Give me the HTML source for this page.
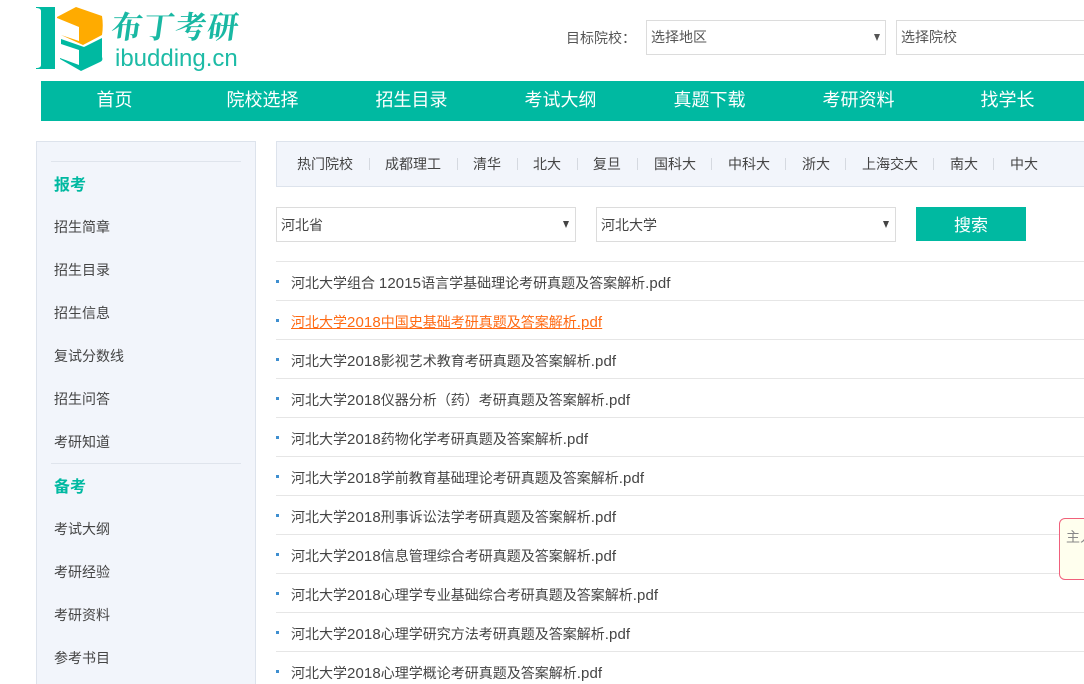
<!DOCTYPE html>
<html lang="zh"><head><meta charset="utf-8"><title>布丁考研</title>
<style>
html,body{margin:0;padding:0;background:#fff;width:1084px;height:684px;overflow:hidden}
#w{width:1084px;height:684px;overflow:hidden;position:relative;font:14px/20px "Liberation Sans","Noto Sans CJK SC",sans-serif;color:#444}
.a{position:absolute;white-space:nowrap}
.nav{position:absolute;left:41px;top:81px;width:1043px;height:40px;background:#00b9a1}
.nav span{position:absolute;top:0;width:149px;text-align:center;color:#fff;font-size:18px;line-height:38px}
.sel{position:absolute;box-sizing:border-box;background:#fff;border:1px solid #dcdcdc;color:#555;padding-left:4px}
.tri{position:absolute;width:0;height:0;border-left:3.5px solid transparent;border-right:3.5px solid transparent;border-top:7px solid #444}
.side{position:absolute;left:36px;top:141px;width:220px;height:560px;box-sizing:border-box;background:#f2f5fb;border:1px solid #dde3ec}
.hr{position:absolute;left:51px;width:190px;height:1px;background:#dfe4ec}
.h{position:absolute;left:54px;font-size:16px;font-weight:bold;color:#00b9a1;line-height:20px}
.m{position:absolute;left:54px;color:#444;line-height:20px}
.hot{position:absolute;left:276px;top:141px;width:810px;height:46px;box-sizing:border-box;background:#f2f5fb;border:1px solid #dde3ec}
.t{position:absolute;top:154px;color:#444;line-height:20px}
.s{position:absolute;top:158px;width:1px;height:12px;background:#d5d9e0}
.row{position:absolute;left:276px;width:808px;height:38px;border-top:1px solid #e6e6e6}
.row i{position:absolute;left:0;top:18px;width:3px;height:3px;background:#3f8fd0}
.row span{position:absolute;left:15px;top:11px;line-height:20px;color:#444;white-space:nowrap}
.row span b{font-weight:normal;font-size:15px;letter-spacing:.1px}
.row span.o{color:#ff6a13;text-decoration:underline}
</style></head><body><div id="w">

<svg class="a" style="left:30px;top:0" width="85" height="80" viewBox="30 0 85 80">
<path fill="#00b9a1" d="M36 7H55V69H36V68C39 68 41 67 41 65V11C41 9 39 8 36 8Z"/>
<path fill="#ffab00" d="M57 17L76 7L102 16C103 22 103 29 102 35L83 45L61 35V35L79 41V27L57 18Z"/>
<path fill="#00b9a1" d="M61 39L84 47L102 38V57C103 60 102 61 100 62L81 71L60 59V58L79 65V50L61 44Z"/>
</svg>
<div class="a" style="left:109px;top:5px;font:bold 31px/40px 'Noto Serif CJK SC',serif;color:#19b8a3;letter-spacing:1px;transform:skewX(-8deg);transform-origin:0 100%">布丁考研</div>
<div class="a" style="left:115px;top:44px;font:24px/30px 'Liberation Sans',sans-serif;color:#1dbba6">ibudding.cn</div>

<div class="a" style="left:566px;top:28px;color:#555">目标院校：</div>
<div class="sel" style="left:646px;top:20px;width:240px;height:35px;line-height:33px">选择地区</div>
<div class="tri" style="left:873.5px;top:34px;border-top-color:#555"></div>
<div class="sel" style="left:896px;top:20px;width:200px;height:35px;line-height:33px">选择院校</div>

<div class="nav">
<span style="left:-1px">首页</span><span style="left:147px">院校选择</span><span style="left:296px">招生目录</span><span style="left:445px">考试大纲</span><span style="left:594px">真题下载</span><span style="left:743px">考研资料</span><span style="left:892px">找学长</span>
</div>

<div class="side"></div>
<div class="hr" style="top:161px"></div>
<div class="h" style="top:176px">报考</div>
<div class="m" style="top:217px">招生简章</div>
<div class="m" style="top:260px">招生目录</div>
<div class="m" style="top:303px">招生信息</div>
<div class="m" style="top:346px">复试分数线</div>
<div class="m" style="top:389px">招生问答</div>
<div class="m" style="top:432px">考研知道</div>
<div class="hr" style="top:463px"></div>
<div class="h" style="top:478px">备考</div>
<div class="m" style="top:519px">考试大纲</div>
<div class="m" style="top:562px">考研经验</div>
<div class="m" style="top:605px">考研资料</div>
<div class="m" style="top:648px">参考书目</div>

<div class="hot"></div>
<div class="t" style="left:297px">热门院校</div><div class="s" style="left:369px"></div>
<div class="t" style="left:385px">成都理工</div><div class="s" style="left:457px"></div>
<div class="t" style="left:473px">清华</div><div class="s" style="left:517px"></div>
<div class="t" style="left:533px">北大</div><div class="s" style="left:577px"></div>
<div class="t" style="left:593px">复旦</div><div class="s" style="left:637px"></div>
<div class="t" style="left:654px">国科大</div><div class="s" style="left:711px"></div>
<div class="t" style="left:728px">中科大</div><div class="s" style="left:785px"></div>
<div class="t" style="left:802px">浙大</div><div class="s" style="left:845px"></div>
<div class="t" style="left:862px">上海交大</div><div class="s" style="left:933px"></div>
<div class="t" style="left:950px">南大</div><div class="s" style="left:993px"></div>
<div class="t" style="left:1010px">中大</div>

<div class="sel" style="left:276px;top:207px;width:300px;height:35px;line-height:34px;color:#444">河北省</div>
<div class="tri" style="left:563px;top:221px"></div>
<div class="sel" style="left:596px;top:207px;width:300px;height:35px;line-height:34px;color:#444">河北大学</div>
<div class="tri" style="left:883px;top:221px"></div>
<div class="a" style="left:916px;top:207px;width:110px;height:34px;background:#00b9a1;color:#fff;font-size:17px;line-height:38px;text-align:center">搜索</div>

<div class="row" style="top:261px"><i></i><span>河北大学组合 <b>12015</b>语言学基础理论考研真题及答案解析<b>.pdf</b></span></div>
<div class="row" style="top:300px"><i></i><span class="o">河北大学<b>2018</b>中国史基础考研真题及答案解析<b>.pdf</b></span></div>
<div class="row" style="top:339px"><i></i><span>河北大学<b>2018</b>影视艺术教育考研真题及答案解析<b>.pdf</b></span></div>
<div class="row" style="top:378px"><i></i><span>河北大学<b>2018</b>仪器分析（药）考研真题及答案解析<b>.pdf</b></span></div>
<div class="row" style="top:417px"><i></i><span>河北大学<b>2018</b>药物化学考研真题及答案解析<b>.pdf</b></span></div>
<div class="row" style="top:456px"><i></i><span>河北大学<b>2018</b>学前教育基础理论考研真题及答案解析<b>.pdf</b></span></div>
<div class="row" style="top:495px"><i></i><span>河北大学<b>2018</b>刑事诉讼法学考研真题及答案解析<b>.pdf</b></span></div>
<div class="row" style="top:534px"><i></i><span>河北大学<b>2018</b>信息管理综合考研真题及答案解析<b>.pdf</b></span></div>
<div class="row" style="top:573px"><i></i><span>河北大学<b>2018</b>心理学专业基础综合考研真题及答案解析<b>.pdf</b></span></div>
<div class="row" style="top:612px"><i></i><span>河北大学<b>2018</b>心理学研究方法考研真题及答案解析<b>.pdf</b></span></div>
<div class="row" style="top:651px"><i></i><span>河北大学<b>2018</b>心理学概论考研真题及答案解析<b>.pdf</b></span></div>

<div class="a" style="left:1059px;top:518px;width:60px;height:62px;box-sizing:border-box;background:#ffffee;border:1px solid #f0607c;border-radius:6px;padding:8px 0 0 6px;font-size:14px;color:#888">主人</div>
</div></body></html>
